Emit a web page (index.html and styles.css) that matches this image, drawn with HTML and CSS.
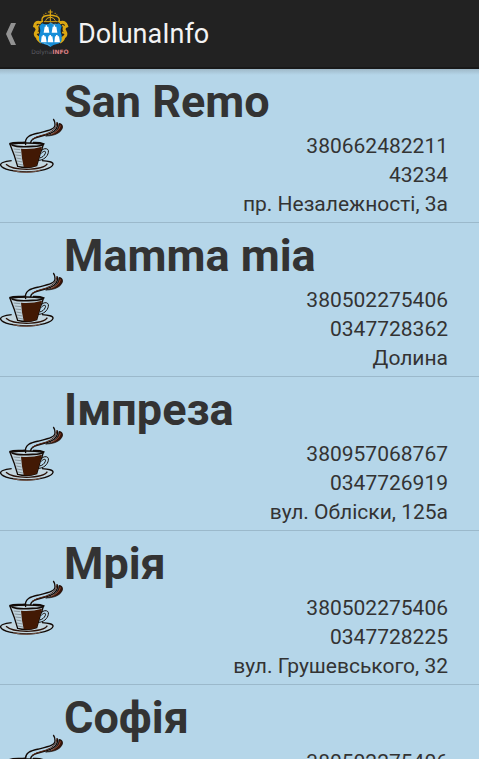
FILE: index.html
```
<!DOCTYPE html>
<html lang="uk">
<head>
<meta charset="utf-8">
<meta name="viewport" content="width=device-width, initial-scale=1">
<title>DolunaInfo</title>
<link rel="stylesheet" href="styles.css">
</head>
<body>
<svg class="defs" aria-hidden="true">
  <symbol id="cup" viewBox="0 12 192 192">
    <path d="M35 152C10 154 0 160 2 166C6 178 45 186 80 186C120 185 157 175 159 163C160 156 145 153 126 152" fill="#c3d6df" stroke="#120a06" stroke-width="4"/>
    <path d="M18 163C30 174 50 178 80 178C112 177 136 171 142 161" fill="none" stroke="#2a1208" stroke-width="4"/>
    <path d="M40 182Q85 193 122 180" fill="none" stroke="#805e50" stroke-width="3"/>
    <path d="M30 103Q80 95 130 103Q127 116 121 129L110 167Q82 177 53 169L42 134Z" fill="#bfd2dc" stroke="#120a06" stroke-width="4"/>
    <path d="M28 101C42 96 55 99 76 97M99 98Q120 97 131 102Q125 109 98 109Q55 113 35 105" fill="none" stroke="#120a06" stroke-width="5"/>
    <path d="M63 116Q95 119 126 110L121 129L110 167Q92 175 71 171L66 145Z" fill="#421904"/>
    <path d="M41 117L61 119M44 126L63 128M46 135L64 137M49 144L65 147M51 153L67 156M54 162L69 165" stroke="#89979e" stroke-width="3"/>
    <path d="M124 122C133 112 148 115 145 127C143 140 130 151 115 151M124 130C132 121 139 123 136 130C133 138 127 142 119 144" fill="none" stroke="#120a06" stroke-width="3"/>
    <path d="M77 105C72 80 92 74 116 69C145 62 166 58 165 43Q164 32 160 27" fill="none" stroke="#120a06" stroke-width="4"/>
    <path d="M91 99C95 79 126 81 151 70C169 62 175 52 172 37" fill="none" stroke="#120a06" stroke-width="4"/>
    <path d="M96 88C112 76 134 77 151 66C165 57 171 49 170 37" fill="none" stroke="#522211" stroke-width="3"/>
    <path d="M137 78C162 73 175 61 177 40Q188 41 188 51C185 67 166 78 137 78Z" fill="#3a1408" stroke="#120a06" stroke-width="2"/>
    <path d="M153 73Q178 64 181 46" fill="none" stroke="#b5674b" stroke-width="2"/>
  </symbol>
</svg>
<header class="bar">
  <button class="back" type="button" aria-label="Назад">
    <svg viewBox="0 0 12 24"><path d="M6 1h5L6 12l5 11H6L1 12Z" fill="#929292"/></svg>
  </button>
  <div class="logo">
    <svg class="crest" viewBox="0 0 132 120" aria-hidden="true">
      <g fill="none" stroke="#dca813">
        <path d="M43 48Q39 34 51 30Q67 25 86 31Q97 35 93 49" stroke-width="4"/>
        <path d="M53 44Q54 36 67 33Q80 36 82 44M67 21V46M48 47H89" stroke-width="3"/>
        <path d="M67 12V25M61 18H73M47 27h1M86 27h1M53 22h1M81 22h1" stroke-width="3" stroke-linecap="round"/>
        <path d="M39 51Q22 44 20 60Q32 64 25 76Q17 87 29 94Q28 101 40 109M95 51Q112 44 116 60Q103 64 111 76Q118 87 107 94Q107 101 95 109" stroke-width="9"/>
        <path d="M33 51L45 45M102 51L91 45M22 68L33 57M112 68L103 57M19 83L33 79M116 83L102 79M26 100L38 94M108 100L97 94" stroke-width="5"/>
      </g>
      <path d="M42 52Q57 59 67 50Q77 59 93 52L101 61Q95 76 101 88V102Q99 111 87 114Q76 116 67 123Q58 116 47 114Q35 111 33 102V88Q40 76 34 61Z" fill="#168ed8"/>
      <path d="M67 50Q76 58 85 54M67 120Q58 113 48 112" fill="none" stroke="#7bc3e8" stroke-width="2"/>
      <g fill="#fff">
        <path d="M47 80l3-18h3v-4h4v4h4l3 18ZM71 80l3-18h3v-4h4v4h4l3 18Z"/>
        <path d="M39 109l2-18h3v-4h5v4h4l3 18ZM59 109l2-18h3v-4h5v4h4l3 18ZM79 109l2-18h3v-4h5v4h4l3 18Z"/>
      </g>
    </svg>
    <span class="wordmark">Dolyna<b>INFO</b></span>
  </div>
  <h1 class="title">DolunaInfo</h1>
</header>
<main class="list">
  <article class="place">
    <svg class="cup" aria-hidden="true"><use href="#cup"/></svg>
    <div class="info"><h2>San Remo</h2><p>380662482211</p><p>43234</p><p>пр. Незалежності, 3а</p></div>
  </article>
  <article class="place">
    <svg class="cup" aria-hidden="true"><use href="#cup"/></svg>
    <div class="info"><h2>Mamma mia</h2><p>380502275406</p><p>0347728362</p><p>Долина</p></div>
  </article>
  <article class="place">
    <svg class="cup" aria-hidden="true"><use href="#cup"/></svg>
    <div class="info"><h2>Імпреза</h2><p>380957068767</p><p>0347726919</p><p>вул. Обліски, 125а</p></div>
  </article>
  <article class="place">
    <svg class="cup" aria-hidden="true"><use href="#cup"/></svg>
    <div class="info"><h2>Мрія</h2><p>380502275406</p><p>0347728225</p><p>вул. Грушевського, 32</p></div>
  </article>
  <article class="place">
    <svg class="cup" aria-hidden="true"><use href="#cup"/></svg>
    <div class="info"><h2>Софія</h2><p>380502275406</p></div>
  </article>
</main>
</body>
</html>
```
FILE: styles.css
```
* { box-sizing: border-box; }

body {
  height: 100vh;
  margin: 0;
  display: flex;
  flex-direction: column;
  overflow: hidden;
  background: #b5d6e9;
  color: #333;
  font-family: Roboto, "Liberation Sans", sans-serif;
}

h1, h2, p { margin: 0; }

.defs { position: absolute; width: 0; height: 0; }

.bar {
  flex: none;
  display: flex;
  align-items: center;
  height: 69px;
  padding-left: 5px;
  background: #222;
  border-bottom: 2px solid #191919;
}

.back {
  width: 12px;
  height: 24px;
  padding: 0;
  border: 0;
  background: none;
}

.back svg { display: block; width: 12px; height: 24px; }

.logo {
  width: 44px;
  margin-left: 11px;
  padding-bottom: 5px;
  display: flex;
  flex-direction: column;
  align-items: center;
  gap: 2px;
}

.crest { width: 44px; height: 40px; overflow: visible; }

.wordmark {
  color: #5b5b62;
  font: 6px/8px "DejaVu Sans", sans-serif;
}

.wordmark b { color: #dc7f83; }

.title {
  margin-left: 6px;
  color: #f3f3f3;
  font-size: 27px;
  font-weight: 400;
  line-height: 32px;
}

.list {
  flex: 1;
  min-height: 0;
  overflow: hidden;
  background: linear-gradient(#9fb9c8, #b5d6e9 6px);
}

.place {
  display: flex;
  align-items: center;
  min-height: 154px;
  border-bottom: 1px solid #9bb9cb;
}

.cup { flex: none; width: 64px; height: 64px; }

.info {
  flex: 1;
  align-self: flex-start;
  padding: 3px 31px 3px 0;
}

.info h2 {
  font-size: 45px;
  font-weight: 700;
  line-height: 60px;
}

.info p {
  font-size: 21px;
  line-height: 29px;
  text-align: right;
}
```
